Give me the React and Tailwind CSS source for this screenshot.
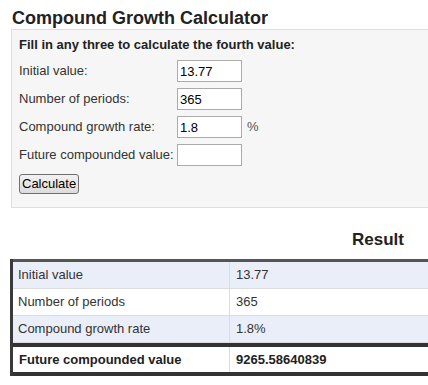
import React, { useState } from 'react';

// Compound growth calculator: form panel + result table
const fields = [
  { id: 'initial', label: 'Initial value:', value: '13.77' },
  { id: 'periods', label: 'Number of periods:', value: '365' },
  { id: 'rate', label: 'Compound growth rate:', value: '1.8', suffix: '%' },
  { id: 'future', label: 'Future compounded value:', value: '' },
];

const results = [
  { label: 'Initial value', value: '13.77' },
  { label: 'Number of periods', value: '365' },
  { label: 'Compound growth rate', value: '1.8%' },
];

export default function App() {
  const [values, setValues] = useState(
    Object.fromEntries(fields.map((f) => [f.id, f.value]))
  );

  return (
    <div
      className="w-[428px] h-[385px] overflow-hidden bg-white text-[13px] text-[#333]"
      style={{ fontFamily: '"Liberation Sans", Arial, sans-serif' }}
    >
      <div className="w-[460px] pt-[7px]">
        {/* Titulo */}
        <h1 className="pl-[12px] text-[18px] leading-[22px] font-bold text-[#222]">
          Compound Growth Calculator
        </h1>

        {/* Formulario */}
        <div className="ml-[11px] border border-[#dedede] bg-[#f6f6f6] pl-[7px] pt-[7px] pb-[13px]">
          <p className="font-bold leading-[16px] text-[#222]">
            Fill in any three to calculate the fourth value:
          </p>
          <div className="mt-[7px] flex flex-col gap-[6px]">
            {fields.map((f) => (
              <div key={f.id} className="flex items-center">
                <label htmlFor={f.id} className="w-[158px] leading-[16px]">
                  {f.label}
                </label>
                <input
                  id={f.id}
                  value={values[f.id]}
                  onChange={(e) => setValues({ ...values, [f.id]: e.target.value })}
                  className="w-[65px] h-[22px] border border-[#ababab] bg-white pl-[2px] text-[13px] text-black outline-none"
                />
                {f.suffix && <span className="ml-[5px] text-[#555]">{f.suffix}</span>}
              </div>
            ))}
          </div>
          <button
            type="button"
            className="mt-[8px] h-[20px] px-[2px] rounded-[3px] border border-[#707070] bg-gradient-to-b from-[#f2f2f2] to-[#dcdcdc] text-[13px] leading-[16px] text-black"
          >
            Calculate
          </button>
        </div>

        {/* Resultado */}
        <h2 className="mt-[22px] w-[404px] text-right text-[17px] leading-[20px] font-bold text-[#222]">
          Result
        </h2>

        <div className="mt-[9px] ml-[10px] border-l-[3px] border-[#3a3a3a]">
          <div className="border-t-[3px] border-[#555]">
            {results.map((r, i) => (
              <div
                key={r.label}
                className={`flex h-[27px] border-b border-[#dcdcdc] ${
                  i % 2 === 0 ? 'bg-[#eaeef9]' : 'bg-white'
                }`}
              >
                <div className="w-[217px] flex items-center pl-[5px] border-r border-[#dcdcdc]">
                  {r.label}
                </div>
                <div className="flex items-center pl-[6px]">{r.value}</div>
              </div>
            ))}
          </div>
          <div className="flex h-[33px] border-y-[4px] border-[#333] bg-white font-bold text-[#222]">
            <div className="w-[217px] flex items-center pl-[6px] border-r border-[#dcdcdc]">
              Future compounded value
            </div>
            <div className="flex items-center pl-[6px]">9265.58640839</div>
          </div>
        </div>
      </div>
    </div>
  );
}
